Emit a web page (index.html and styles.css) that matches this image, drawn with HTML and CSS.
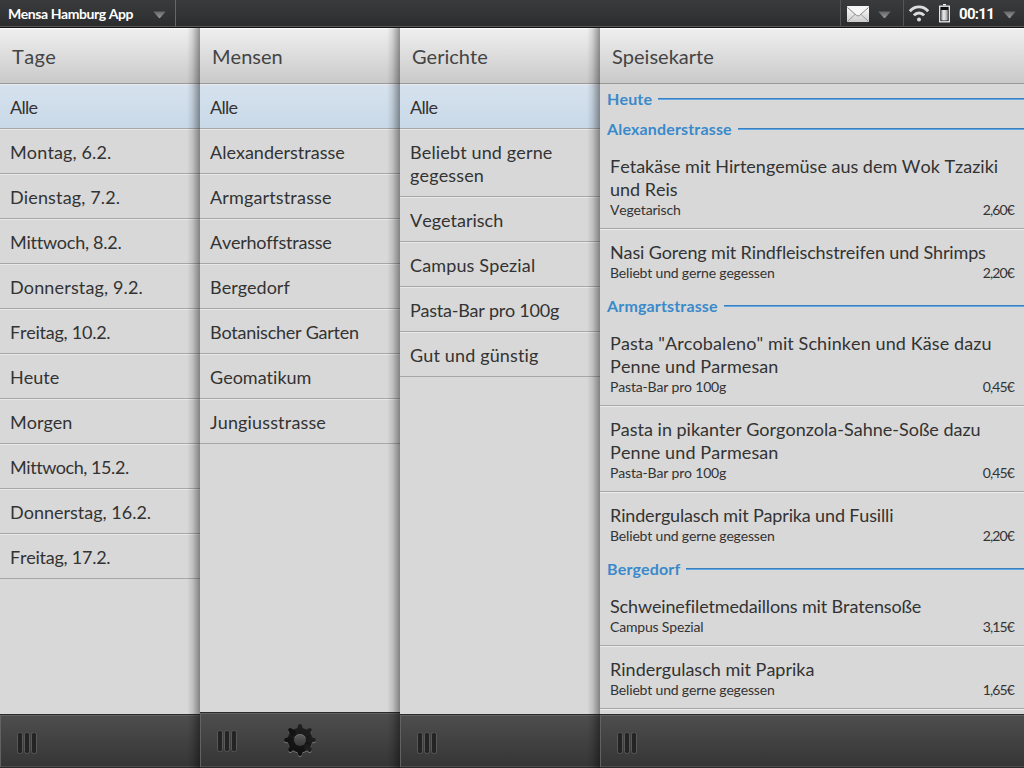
FILE: index.html
```html
<!DOCTYPE html>
<html lang="de">
<head>
<meta charset="utf-8">
<title>Mensa Hamburg App</title>
<link rel="stylesheet" href="styles.css">
</head>
<body>
<svg class="defs" width="0" height="0">
  <defs>
    <linearGradient id="tri" x1="0" y1="0" x2="0" y2="1"><stop offset="0" stop-color="#666"/><stop offset="1" stop-color="#999"/></linearGradient>
    <linearGradient id="mail" x1="0" y1="0" x2="0" y2="1"><stop offset="0" stop-color="#fff"/><stop offset="1" stop-color="#ccc"/></linearGradient>
    <linearGradient id="cell" x1="0" y1="0" x2="1" y2="0"><stop offset="0" stop-color="#999"/><stop offset=".4" stop-color="#eee"/><stop offset="1" stop-color="#999"/></linearGradient>
    <linearGradient id="cog" x1="0" y1="0" x2="0" y2="1"><stop offset="0" stop-color="#202020"/><stop offset=".4" stop-color="#191919"/><stop offset="1" stop-color="#101010"/></linearGradient>
    <linearGradient id="hub" x1="0" y1="0" x2="0" y2="1"><stop offset="0" stop-color="#5a5a5a"/><stop offset="1" stop-color="#3a3a3a"/></linearGradient>
    <symbol id="arrow" viewBox="0 0 13 8"><path d="M.3.5h12.4L7.3 6.8q-.8.9-1.6 0z" fill="url(#tri)"/></symbol>
    <symbol id="grip" viewBox="0 0 20 22">
      <g fill="#242424" stroke="#585858" stroke-width="1"><rect x=".5" y=".5" width="5" height="21" rx="2"/><rect x="7.5" y=".5" width="5" height="21" rx="2"/><rect x="14.5" y=".5" width="5" height="21" rx="2"/></g>
    </symbol>
    <g id="gear">
      <circle cx="16" cy="16" r="12.300"/>
      <path id="teeth" d="M12 5.500Q13.800 4.500 13.900 2 14.200 0 16 0t2.100 2Q18.200 4.500 20 5.500L16 10zM12 26.500Q13.800 27.500 13.900 30 14.200 32 16 32t2.100-2Q18.200 27.500 20 26.500L16 22z"/>
      <use href="#teeth" transform="rotate(45 16 16)"/><use href="#teeth" transform="rotate(90 16 16)"/><use href="#teeth" transform="rotate(135 16 16)"/>
    </g>
  </defs>
</svg>
<header class="status">
  <div class="app-menu"><span class="app-name">Mensa Hamburg App</span><svg class="arrow" width="13" height="8"><use href="#arrow"/></svg></div>
  <div class="notify">
    <svg width="22" height="16" viewBox="0 0 22 16"><rect width="22" height="16" rx=".8" fill="url(#mail)"/><path d="M1 15l7-6.500M21 15l-7-6.500" stroke="#999" fill="none"/><path d="M.5 1.500L9.500 9.400q1.500 1.200 3 0L21.500 1.500V0H.5z" fill="#f6f6f6"/><path d="M.5 1.500L9.500 9.400q1.500 1.200 3 0L21.500 1.500" fill="none" stroke="#888"/></svg>
    <svg class="arrow" width="13" height="8"><use href="#arrow"/></svg>
  </div>
  <div class="system">
    <svg width="20" height="17" viewBox="0 0 20 17" fill="none" stroke="#ddd" stroke-width="2.900"><path d="M.8 6.200Q4.700 1.900 10 1.900t9.200 4.300"/><path d="M4.900 10.400Q7 8 10 8t5.100 2.400"/><circle cx="10" cy="14.600" r="2" fill="#ddd" stroke="none"/></svg>
    <svg class="battery" width="11" height="19" viewBox="0 0 11 19"><path d="M4 .7h3" stroke="#eee" stroke-width="1.400"/><rect x=".7" y="2.200" width="9.600" height="15.600" fill="#111" stroke="#eee" stroke-width="1.300"/><rect x="2.200" y="6" width="6.600" height="10.500" fill="url(#cell)"/></svg>
    <span class="clock">00:11</span>
    <svg class="arrow" width="13" height="8"><use href="#arrow"/></svg>
  </div>
</header>
<main class="panes">
  <section class="pane side">
    <h1 class="loose">Tage</h1>
    <ul class="list">
      <li class="selected">Alle</li><li class="loose">Montag, 6.2.</li><li class="loose">Dienstag, 7.2.</li><li class="tight">Mittwoch, 8.2.</li><li class="loose">Donnerstag, 9.2.</li><li class="tight">Freitag, 10.2.</li><li>Heute</li><li>Morgen</li><li class="tighter">Mittwoch, 15.2.</li><li>Donnerstag, 16.2.</li><li class="tight">Freitag, 17.2.</li>
    </ul>
    <footer><svg class="grip" width="20" height="22"><use href="#grip"/></svg></footer>
  </section>
  <section class="pane side">
    <h1>Mensen</h1>
    <ul class="list">
      <li class="selected">Alle</li><li>Alexanderstrasse</li><li class="loose">Armgartstrasse</li><li class="tight">Averhoffstrasse</li><li>Bergedorf</li><li class="tight">Botanischer Garten</li><li>Geomatikum</li><li class="loose">Jungiusstrasse</li>
    </ul>
    <footer class="tall"><svg class="grip" width="20" height="22"><use href="#grip"/></svg>
      <svg class="settings" width="32" height="33" viewBox="0 0 32 33"><use href="#gear" y="1" fill="#777"/><use href="#gear" fill="url(#cog)"/><circle cx="16" cy="16" r="6" fill="url(#hub)"/><path d="M10.500 14a6 6 0 0 1 11 0" fill="none" stroke="#777" stroke-width=".7"/></svg>
    </footer>
  </section>
  <section class="pane side">
    <h1>Gerichte</h1>
    <ul class="list">
      <li class="selected">Alle</li><li class="loose">Beliebt und gerne<br>gegessen</li><li>Vegetarisch</li><li class="loose">Campus Spezial</li><li class="tight">Pasta-Bar pro 100g</li><li class="loose">Gut und günstig</li>
    </ul>
    <footer><svg class="grip" width="20" height="22"><use href="#grip"/></svg></footer>
  </section>
  <section class="pane menu">
    <h1>Speisekarte</h1>
    <div class="dishes">
      <h2>Heute</h2>
      <h2>Alexanderstrasse</h2>
      <ul>
        <li><p>Fetakäse mit Hirtengemüse aus dem Wok Tzaziki<br>und Reis</p><div class="meta"><span>Vegetarisch</span><span class="price">2,60€</span></div></li>
        <li><p class="tight">Nasi Goreng mit Rindfleischstreifen und Shrimps</p><div class="meta"><span>Beliebt und gerne gegessen</span><span class="price">2,20€</span></div></li>
      </ul>
      <h2>Armgartstrasse</h2>
      <ul>
        <li><p class="loose">Pasta "Arcobaleno" mit Schinken und Käse dazu<br>Penne und Parmesan</p><div class="meta"><span>Pasta-Bar pro 100g</span><span class="price">0,45€</span></div></li>
        <li><p>Pasta in pikanter Gorgonzola-Sahne-Soße dazu<br><span class="loose">Penne und Parmesan</span></p><div class="meta"><span>Pasta-Bar pro 100g</span><span class="price">0,45€</span></div></li>
        <li><p class="tight">Rindergulasch mit Paprika und Fusilli</p><div class="meta"><span>Beliebt und gerne gegessen</span><span class="price">2,20€</span></div></li>
      </ul>
      <h2>Bergedorf</h2>
      <ul class="more">
        <li><p class="tight">Schweinefiletmedaillons mit Bratensoße</p><div class="meta"><span>Campus Spezial</span><span class="price">3,15€</span></div></li>
        <li><p>Rindergulasch mit Paprika</p><div class="meta"><span>Beliebt und gerne gegessen</span><span class="price">1,65€</span></div></li>
      </ul>
    </div>
    <footer><svg class="grip" width="20" height="22"><use href="#grip"/></svg></footer>
  </section>
</main>
</body>
</html>
```
FILE: styles.css
```css
* { box-sizing: border-box; margin: 0; padding: 0; }
body { width: 1024px; height: 768px; overflow: hidden; display: flex; flex-direction: column; background: #d8d8d8; color: #333; font: 18px/23px Lato, "Open Sans", sans-serif; font-kerning: none; font-variant-ligatures: none; }
ul { list-style: none; }
svg { display: block; flex: none; }
.defs { position: absolute; }

.status { height: 28px; flex: none; display: flex; background: linear-gradient(#3a3b3c, #2b2d2f 26px, #5a5859 26px, #5a5859 27px, #111 27px); color: #fff; font-weight: bold; }
.status > div { display: flex; align-items: center; height: 27px; }
.app-menu { width: 176px; padding-left: 8px; border-right: 1px solid #666; }
.app-name { width: 145px; font-size: 14px; letter-spacing: -0.43px; white-space: nowrap; }
.notify { margin-left: auto; width: 63px; padding-left: 6px; gap: 9px; border-left: 1px solid #555; }
.system { width: 121px; padding-left: 5px; border-left: 1px solid #555; }
.battery { margin: -1px 9px 0 10px; }
.clock { width: 44px; font: bold 15px/20px Roboto, sans-serif; letter-spacing: -0.7px; }
.arrow { margin-top: 2px; }

.panes { flex: 1; min-height: 0; display: flex; }
.pane { position: relative; display: flex; flex-direction: column; min-width: 0; }
.side { width: 200px; }
.side::after { content: ""; position: absolute; top: 0; right: 0; bottom: 0; width: 13px; background: linear-gradient(to right, rgba(0,0,0,0), rgba(0,0,0,.1) 40%, rgba(0,0,0,.4)); }
.menu { flex: 1; }
h1 { height: 56px; flex: none; padding: 0 12px; border-top: 1px solid #fafafa; border-bottom: 1px solid #999; background: linear-gradient(#efefef, #c9c9c9); color: #444; font-size: 20px; font-weight: normal; line-height: 54px; }
h1.loose { letter-spacing: 0.4px; }
.list { flex: 1; }
.list li { padding: 12px 10px 9px; border-bottom: 1px solid #a7a7a7; box-shadow: inset 0 1px #e9e9e9; }
.list li.selected { background: linear-gradient(#d6e2ee, #c9d9e8); letter-spacing: -0.7px; }
.list li.tight { letter-spacing: -0.25px; }
.list li.tighter { letter-spacing: -0.45px; }
.list li.loose { letter-spacing: 0.14px; }

.dishes { flex: 1; min-height: 0; overflow: hidden; }
h2 { height: 30px; display: flex; align-items: center; gap: 6px; padding: 0 0 1px 7px; color: #3a8acb; font-size: 16px; line-height: 28px; letter-spacing: 0.15px; }
h2::after { content: ""; flex: 1; height: 2px; background: linear-gradient(#3b80be 50%, #62a8e6 50%); }
.dishes li { padding: 11px 10px 8px; border-top: 1px solid #ededed; border-bottom: 1px solid #a7a7a7; }
.dishes li:first-child { border-top: 0; }
.dishes li:last-child { border-bottom: 0; }
.dishes .more { border-bottom: 1px solid #ededed; }
.dishes .more li:last-child { border-bottom: 1px solid #a7a7a7; }
.dishes p { white-space: nowrap; }
.dishes .tight { letter-spacing: -0.15px; }
.dishes .loose { letter-spacing: 0.1px; }
.meta { display: flex; justify-content: space-between; height: 19px; line-height: 18px; font-size: 14px; letter-spacing: -0.18px; }
.price { letter-spacing: -0.9px; }

footer { height: 54px; flex: none; display: flex; align-items: center; padding: 4px 0 0 17px; border-top: 1px solid #2b2b2b; border-bottom: 1px solid #2b2b2b; background: linear-gradient(#4e4e4e, #353535); box-shadow: inset 1px 1px #626262, inset 0 -1px #4b4b4b; }
footer.tall { height: 56px; padding-top: 2px; }
.settings { margin: -2px 0 0 47px; }
```
